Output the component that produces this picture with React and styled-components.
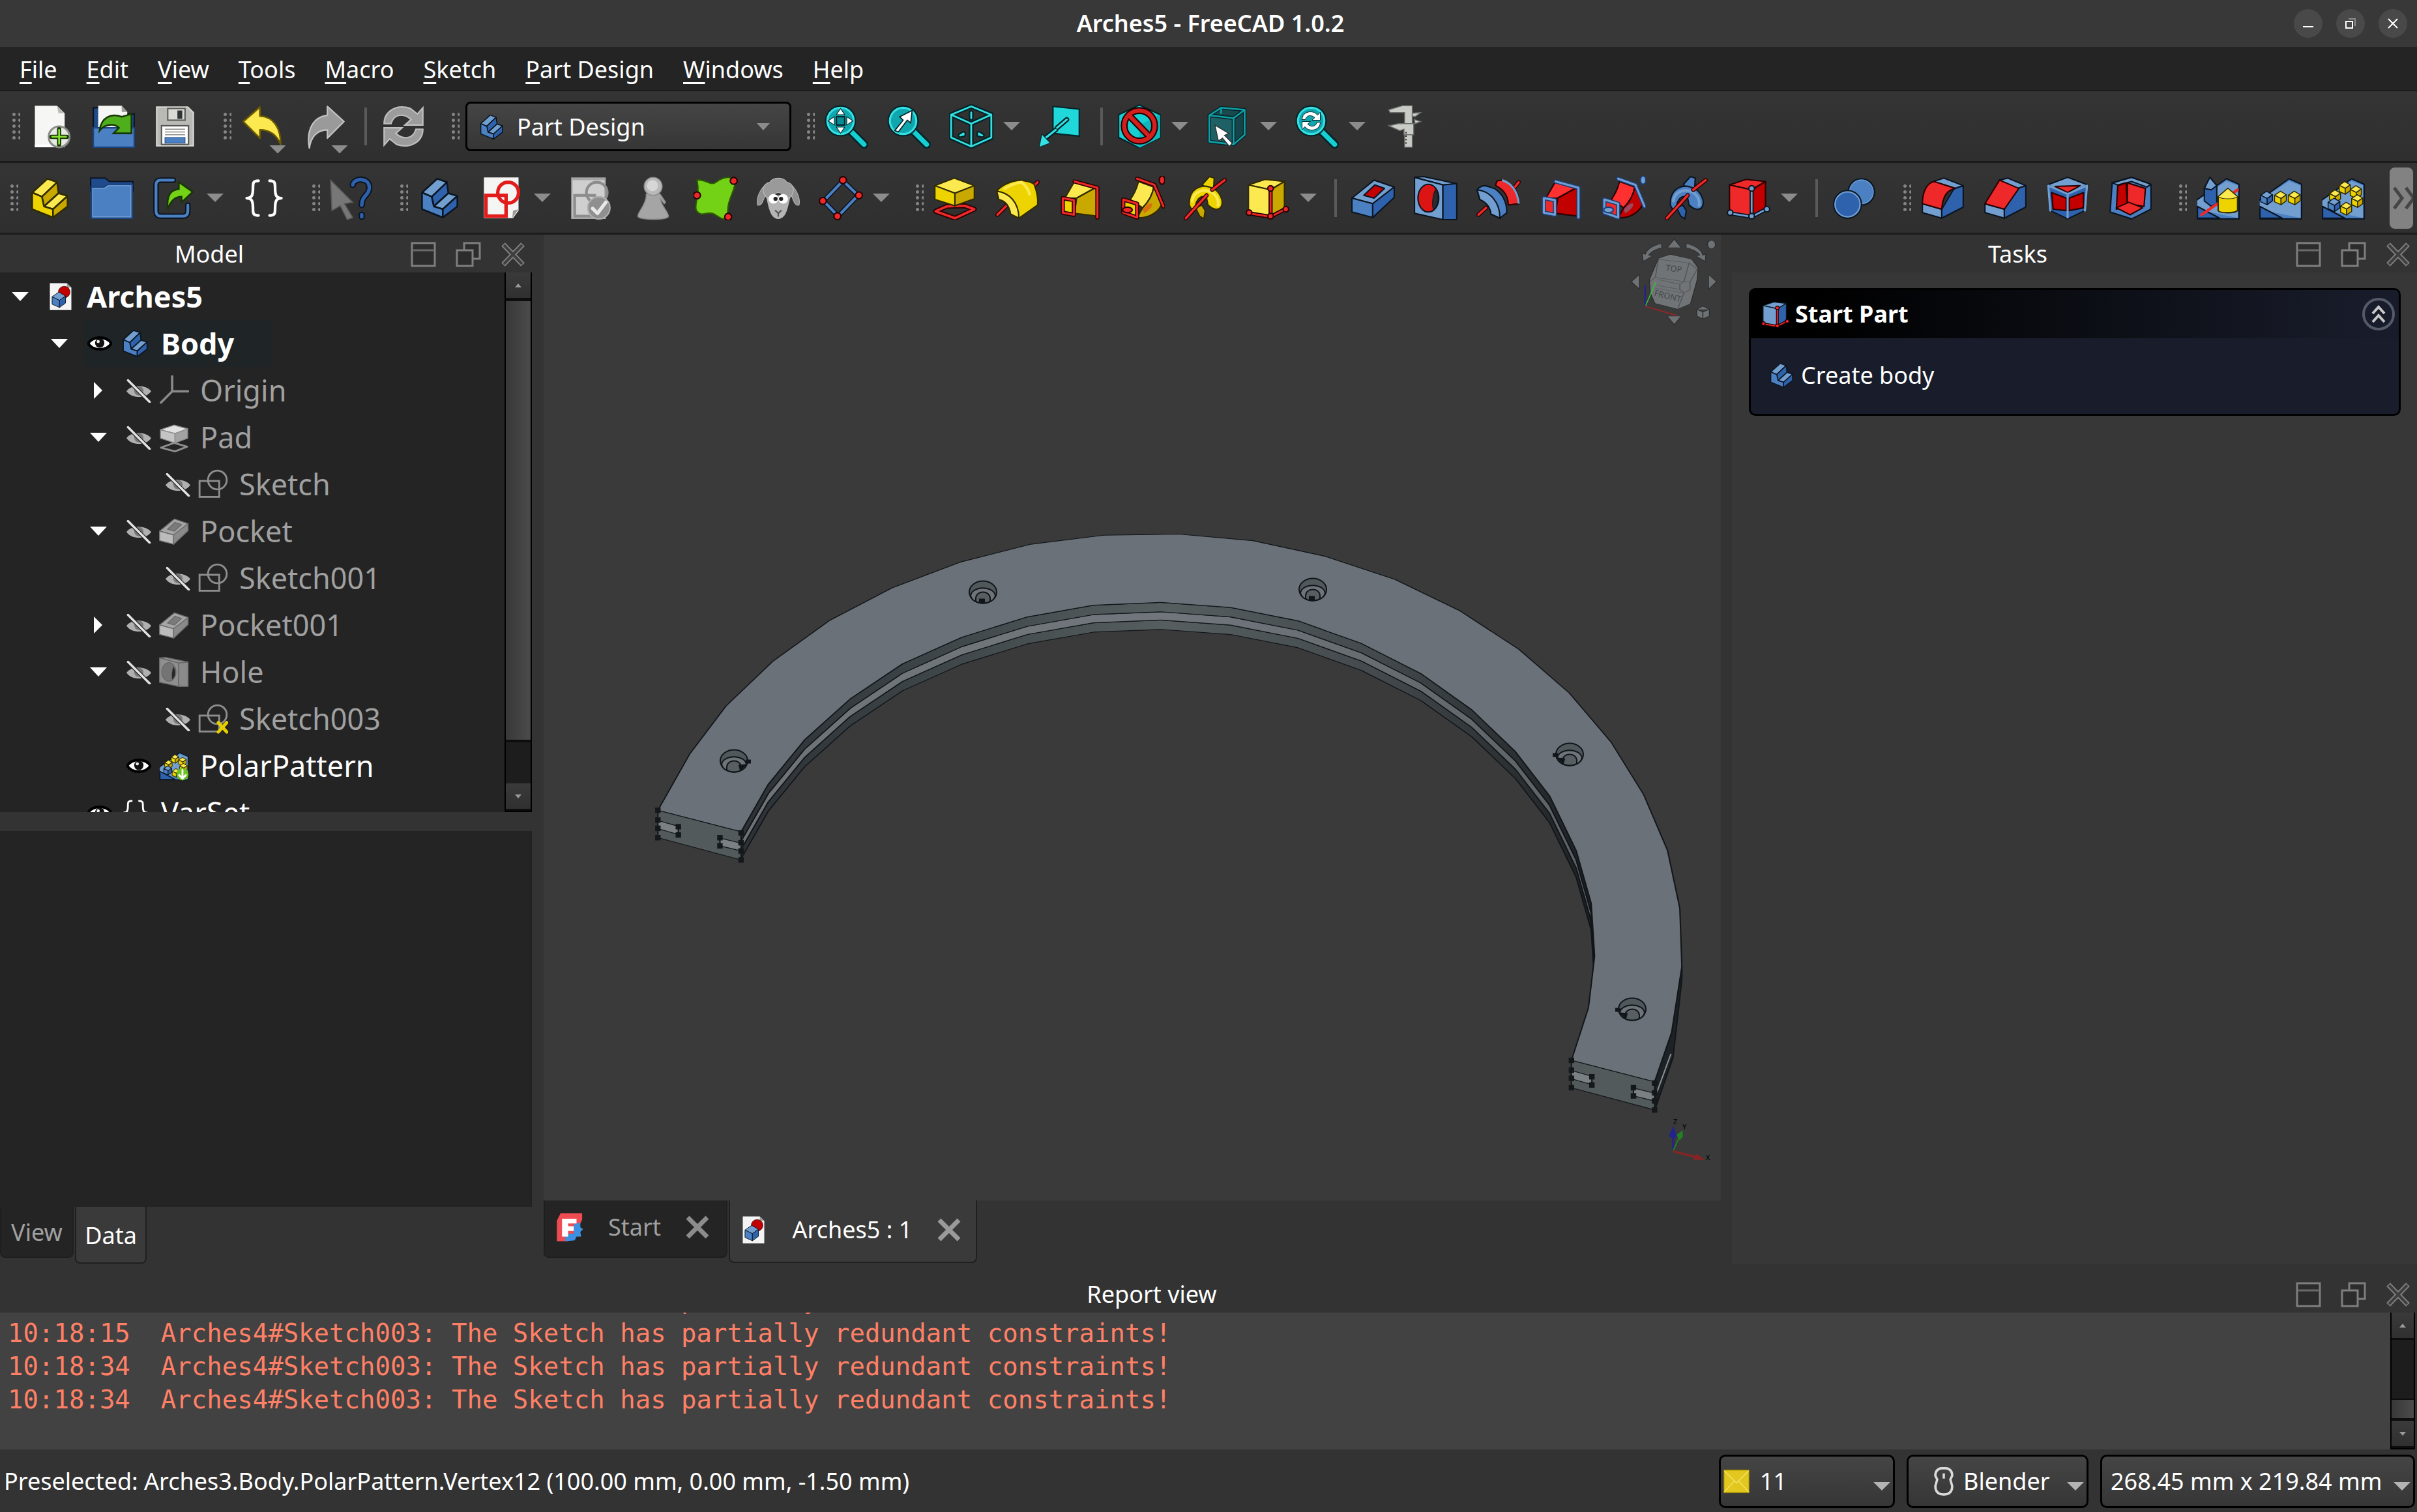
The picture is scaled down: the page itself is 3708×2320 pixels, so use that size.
import React from 'react';
import styled, { createGlobalStyle, css } from 'styled-components';

const Global = createGlobalStyle`
  *, *::before, *::after { box-sizing: border-box; }
  html, body { margin: 0; background: #333333; }
  body, button, select { font-family: "Noto Sans", "Open Sans", sans-serif; font-size: 36px; line-height: 48px; color: #ffffff; }
  button { margin: 0; padding: 0; border: 0; background: none; }
  svg { display: block; flex: none; }
  ul { margin: 0; padding: 0; list-style: none; }
`;

/* ---------- palette ---------- */
const B = { l: '#729fcf', m: '#4b80c2', d: '#2f62ad', k: '#0b1521' };
const Y = { l: '#fce94f', m: '#edd400', d: '#c9a800', k: '#302b00' };
const R = { l: '#ff3030', m: '#ef2929', d: '#c20000', k: '#280000' };
const G = { l: '#dcdcdc', m: '#b4b4b4', d: '#8e8e8e', k: '#555555' };
const C = { l: '#34e0e2', m: '#16cfd2', d: '#078c94', k: '#032428' };

/* ---------- drawing helpers ---------- */
const Poly = ({ p, f = 'none', s = '#0b1521', w = 2 }) => (
  <polygon points={p} fill={f} stroke={s} strokeWidth={w} strokeLinejoin="round" />
);
const Line = ({ d, s = '#fff', w = 3, f = 'none' }) => (
  <path d={d} fill={f} stroke={s} strokeWidth={w} strokeLinejoin="round" strokeLinecap="round" />
);
const Dot = ({ x, y, r = 4, f = R.m, s = R.k }) => <circle cx={x} cy={y} r={r} fill={f} stroke={s} strokeWidth="2" />;
const Cube = ({ x, y, s, c }) => (
  <g>
    <Poly p={`${x},${y + s * 0.35} ${x + s * 0.5},${y} ${x + s},${y + s * 0.3} ${x + s * 0.55},${y + s * 0.62}`} f={c.l} s={c.k} w={1.4} />
    <Poly p={`${x},${y + s * 0.35} ${x + s * 0.55},${y + s * 0.62} ${x + s * 0.55},${y + s * 1.15} ${x},${y + s * 0.9}`} f={c.m} s={c.k} w={1.4} />
    <Poly p={`${x + s},${y + s * 0.3} ${x + s * 0.55},${y + s * 0.62} ${x + s * 0.55},${y + s * 1.15} ${x + s},${y + s * 0.82}`} f={c.d} s={c.k} w={1.4} />
  </g>
);
const Steps = ({ c }) => (
  <g>
    <Poly p="7,24 29,4 43,9 21,30" f={c.l} s={c.k} w={2.4} />
    <Poly p="21,30 43,9 45,25 24,44" f={c.d} s={c.k} w={2.4} />
    <Poly p="24,44 45,25 58,29 37,48" f={c.l} s={c.k} w={2.4} />
    <Poly p="7,24 21,30 24,44 37,48 37,60 7,48" f={c.m} s={c.k} w={2.4} />
    <Poly p="37,48 58,29 58,44 37,60" f={c.d} s={c.k} w={2.4} />
  </g>
);
const Lens = () => (
  <g>
    <Line d="M38 38 L58 58" s={C.k} w={12} />
    <Line d="M38 38 L58 58" s={C.m} w={7} />
    <circle cx="24" cy="24" r="21" fill={C.d} stroke={C.k} strokeWidth="3" />
    <circle cx="24" cy="24" r="19" fill="#0fa6ad" stroke={C.l} strokeWidth="3" />
  </g>
);
const Cycle = ({ f, k, t = '' }) => (
  <g transform={t}>
    <path d="M4 28 C4 10 22 -1 42 6 L52 14 L60 5 V30 H34 L43 22 C32 12 18 14 14 28 Z" fill={f} stroke={k} strokeWidth="2" />
    <path d="M60 36 C60 54 42 65 22 58 L12 50 L4 59 V34 H30 L21 42 C32 52 46 50 50 36 Z" fill={f} stroke={k} strokeWidth="2" />
  </g>
);
const HelixShape = ({ c }) => (
  <g>
    <Poly p="28,12 38,1 45,3 44,18 36,24" f={c.m} s={c.k} />
    <Poly p="18,46 27,42 32,50 30,62 24,58" f={c.d} s={c.k} />
    <path d="M9 42 C8 18 26 12 38 16 C54 20 60 38 54 46 C50 50 42 48 36 42 L34 32 C26 26 18 34 18 46 L12 48 Z" fill={c.m} stroke={c.k} strokeWidth="2" />
    <path d="M13 38 C14 22 30 18 40 23 C50 28 52 38 50 44" fill="none" stroke={c.l} strokeWidth="4" />
    <Line d="M4 61 L34 28 M42 20 L60 6" s={R.k} w={6} />
    <Line d="M4 61 L34 28 M42 20 L60 6" s={R.m} w={3.4} />
  </g>
);
const BoxAxes = ({ c, a, ak }) => (
  <g>
    <Poly p="4,13 28,5 56,8 36,20" f={c.l} s={c.k} />
    <Poly p="4,13 36,20 36,58 4,52" f={c.l} s={c.k} />
    <Poly p="36,20 56,8 56,46 36,58" f={c.d} s={c.k} />
    <Line d="M5 54 L36 59 L57 48 M36 59 V20" s={ak} w={6} />
    <Line d="M5 54 L36 59 L57 48 M36 59 V20" s={a} w={2.6} />
    <Dot x={5} y={53} f={a} s={ak} /><Dot x={36} y={58} f={a} s={ak} /><Dot x={58} y={48} f={a} s={ak} /><Dot x={36} y={18} f={a} s={ak} />
  </g>
);
const LoftShape = ({ c, a, ak }) => (
  <g>
    <Poly p="10,32 24,8 56,16 27,32" f={c.l} s={c.k} />
    <Poly p="27,32 56,16 56,58 24,54" f={c.d} s={c.k} />
    <Line d="M24 8 L57 17 V60" s={ak} w={6} /><Line d="M24 8 L57 17 V60" s={a} w={3} />
    <Poly p="7,32 23,35 23,56 7,53" f={c.m} s={ak} w={6} /><Poly p="7,32 23,35 23,56 7,53" s={a} w={3} />
  </g>
);
const PipeShape = ({ c, a, ak }) => (
  <g>
    <path d="M14 34 C20 26 24 16 26 8 L48 16 C46 28 40 38 32 46 Z" fill={c.l} stroke={c.k} strokeWidth="2" />
    <path d="M32 46 C40 38 46 28 48 16 L60 40 C54 54 38 62 24 60 Z" fill={c.d} stroke={c.k} strokeWidth="2" />
    <path d="M32 48 C38 42 42 38 46 40 C46 46 40 50 34 54 Z" fill={a} opacity=".45" />
    <Line d="M24 4 L49 13 L62 44" s={ak} w={6} /><Line d="M24 4 L49 13 L62 44" s={a} w={3} />
    <Poly p="4,34 24,40 24,60 4,53" f={c.m} s={ak} w={6} /><Poly p="4,34 24,40 24,60 4,53" s={a} w={3} />
    <ellipse cx="10" cy="49" rx="7" ry="4" fill={a} stroke={ak} strokeWidth="2" />
    <ellipse cx="60" cy="6" rx="4" ry="6" fill={a} stroke={ak} strokeWidth="2" />
  </g>
);
const SketchGlyph = ({ c, w = 4 }) => (
  <g fill="none" stroke={c} strokeWidth={w}>
    <rect x="9" y="28" width="29" height="30" />
    <circle cx="41" cy="24" r="15" />
  </g>
);
const Plate = () => (
  <g>
    <Poly p="2,34 44,4 62,12 62,62 2,62" f={B.m} s={B.k} />
    <Poly p="2,36 44,8 60,14 60,60 2,48" f={B.l} s={B.l} w={1} />
    <Poly p="2,44 34,61 2,61" f={B.d} s={B.k} />
  </g>
);
const PocketShape = ({ c, hole }) => (
  <g>
    <Poly p="1,32 33,6 62,16 31,40" f={c.l} s={c.k} />
    <Poly p="1,32 31,40 31,60 1,52" f={c.m} s={c.k} />
    <Poly p="31,40 62,16 62,31 31,60" f={c.d} s={c.k} />
    <Poly p="18,28 34,13 48,18 33,32" f={hole} s={c.k} />
  </g>
);
const HoleShape = ({ c, hole, hd }) => (
  <g>
    <Poly p="1,2 14,1 62,11 42,13" f={c.l} s={c.k} />
    <Poly p="1,2 42,13 42,63 1,54" f={c.l} s={c.k} />
    <Poly p="42,13 62,11 62,63 42,63" f={c.d} s={c.k} />
    <ellipse cx="21" cy="32" rx="15" ry="20" fill={hole} stroke={c.k} strokeWidth="2" />
    <path d="M31 20 C37 30 36 42 28 49 C26 40 27 28 31 20 Z" fill={hd} stroke={c.k} strokeWidth="1" />
  </g>
);
const DocGlyph = () => (
  <g>
    <path d="M8 2 H46 L56 12 V62 H8 Z" fill="#f4f4f4" />
    <path d="M46 2 V12 H56 Z" fill="#9a9a9a" />
    <circle cx="40" cy="22" r="13" fill={R.d} stroke={R.k} strokeWidth="1" />
    <Cube x={13} y={22} s={30} c={B} />
  </g>
);
const RingCubes = () => (
  <g>
    {[[26, 8], [42, 14], [12, 20], [44, 27], [28, 38]].map(([x, y]) => <Cube key={x + '-' + y} x={x} y={y} s={16} c={Y} />)}
    <Cube x={10} y={32} s={17} c={B} />
  </g>
);

/* ---------- icon table (64 x 64 grid) ---------- */
const art = {
  newDoc: <g>
    <path d="M8 2 H40 L51 13 V62 H8 Z" fill="#f6f6f4" /><path d="M40 2 L51 13 H42 Z" fill="#b9b9b5" /><path d="M8 58 H51 V62 H8Z" fill="#fff" />
    <circle cx="43" cy="47" r="15" fill="#e8e8e4" stroke="#8a8c86" strokeWidth="3" />
    <Line d="M43 36 V58 M32 47 H54" s="#173604" w={6} /><Line d="M43 37 V57 M33 47 H53" s="#8ae234" w={2.5} />
  </g>,
  open: <g>
    <path d="M3 5 H40 V14 H62 V34 H3 Z" fill="#204a87" stroke={B.k} strokeWidth="2" />
    <path d="M10 2 H44 L52 11 V34 H10 Z" fill="#f6f6f4" /><path d="M44 2 L52 11 H44 Z" fill="#9a9a98" />
    <path d="M3 34 H62 V62 H3 Z" fill={B.m} stroke="#1b4484" strokeWidth="2" />
    <path d="M12 38 C14 20 28 12 44 18 L58 14 V42 H32 L40 34 C32 26 18 30 12 38 Z" fill="#4fae1b" stroke="#173604" strokeWidth="2.4" />
  </g>,
  save: <g>
    <path d="M5 4 H50 L58 12 V60 H5 Z" fill="#b9bab6" stroke="#dadad6" strokeWidth="2" />
    <rect x="21" y="6" width="25" height="17" fill="#d9d9d5" stroke="#5c5e5a" strokeWidth="2" /><rect x="35" y="9" width="7" height="12" fill="#2e3436" />
    <rect x="12" y="31" width="39" height="27" fill="#fff" stroke="#555753" strokeWidth="2" />
    <path d="M17 36 H46 M17 40 H46 M17 44 H46" stroke="#8b8d88" strokeWidth="1.6" /><rect x="17" y="48" width="29" height="8" fill={B.m} stroke="#204a87" />
  </g>,
  undo: <path d="M4 25 L28 4 V17 C48 18 58 34 58 58 C52 44 42 37 28 37 V49 Z" fill={Y.l} stroke="#6b5a00" strokeWidth="2.4" strokeLinejoin="round" />,
  redo: <path d="M60 25 L36 3 V16 C16 18 5 36 10 64 C12 46 22 37 36 37 V49 Z" fill="#9a9a9a" stroke="#c4c4c4" strokeWidth="2" strokeLinejoin="round" />,
  refresh: <Cycle f="#9c9c9c" k="#c0c0c0" />,
  fit: <g><Lens />
    <rect x="18" y="18" width="12" height="12" fill={C.d} stroke={C.k} strokeWidth="2" />
    {[0, 90, 180, 270].map((a) => <polygon key={a} points="24,6 30,15 18,15" fill="#fff" stroke={C.k} transform={`rotate(${a} 24 24)`} />)}
  </g>,
  fitSel: <g><Lens /><path d="M12 38 L24 23 L19 18 L37 9 L35 27 L30 23 L17 40 Z" fill="#fff" stroke={C.k} strokeWidth="1.6" /></g>,
  iso: <g>
    {[[C.k, 7], [C.l, 2.6]].map(([s, w]) => <Line key={s} s={s} w={w} d="M3 15 L32 3 L61 15 V48 L32 61 L3 48 Z M3 15 L32 28 L61 15 M32 28 V61 M32 12 V20 M16 45 L21 42 V44 Z M43 44 V42 L48 45 Z" />)}
  </g>,
  align: <g>
    <Poly p="22,3 60,7 60,46 22,42" f="#20d8da" s={C.k} w={2} />
    <Line d="M12 48 L26 37 M28 34 L42 22" s={C.k} w={7} /><Line d="M12 48 L26 37 M28 34 L42 22" s={C.l} w={3} />
    <Poly p="2,62 6,43 18,56" f={C.l} s={C.k} w={1} />
  </g>,
  noDraw: <g>
    <Poly p="32,1 62,15 62,48 32,63 2,48 2,15" f={C.m} s={C.k} /><Poly p="32,30 62,15 62,48 32,63" f="#0fb5bb" s="none" />
    {[[R.k, 10], ['#d41f1f', 6]].map(([s, w]) => <g key={s}><circle cx="32" cy="31" r="22" fill="none" stroke={s} strokeWidth={w} /><Line d="M17 16 L47 47" s={s} w={w} /></g>)}
  </g>,
  boxSel: <g>
    <Poly p="5,16 22,5 56,8 40,20" f="#17494d" s={C.k} w={5} /><Poly p="5,16 40,20 40,58 5,54" f="#1f6064" s={C.k} w={5} /><Poly p="40,20 56,8 56,44 40,58" f="#174448" s={C.k} w={5} />
    <Line d="M5 16 L22 5 L56 8 L40 20 Z M5 16 V54 L40 58 V20 M56 8 V44 L40 58 M22 6 V13" s="#12a0a6" w={2.4} />
    <path d="M13 30 L33 42 L27 45 L38 56 L34 61 L24 49 L18 53 Z" fill="#fff" stroke="#2e3436" strokeWidth="1.4" />
  </g>,
  lensSync: <g><Lens /><Cycle f="#fff" k={C.k} t="translate(9 9) scale(.47)" /></g>,
  caliper: <g fill="#c9cbc7" stroke="#6d6f6b" strokeWidth="1.4">
    <path d="M8 8 L28 2 H42 V62 H31 V12 H10 Z" /><path d="M8 31 L22 28 H44 V44 H30 V36 L24 38 Z" />
    <path d="M42 13 L54 12 L46 18 L42 17 Z M45 22 L54 25 L46 28 Z" /><path d="M33 40 V58" stroke="#333" strokeWidth="2" strokeDasharray="2 3" />
  </g>,
  part: <Steps c={Y} />,
  body: <Steps c={B} />,
  folder: <g>
    <path d="M1 3 H22 L28 8 H62 V22 H1 Z" fill="#1f4b8c" stroke={B.k} strokeWidth="2" /><path d="M2 16 H20 L26 12 H61 V61 H2 Z" fill={B.m} stroke="#1b4484" strokeWidth="2.4" />
    <path d="M4 18 H21 L27 14 H59 V59 H4 Z" fill="none" stroke={B.l} strokeWidth="1.4" />
  </g>,
  link: <g>
    {[[B.k, 8], [B.m, 4]].map(([s, w]) => <Line key={s} s={s} w={w} d="M30 6 H12 Q5 6 5 13 V50 Q5 58 12 58 H44 Q51 58 51 50 V42" />)}
    <path d="M22 48 C20 28 26 20 38 19 V9 L58 23 L42 38 V30 C32 30 26 36 22 48 Z" fill="#73d216" stroke="#173604" strokeWidth="2.4" />
  </g>,
  braces: <Line s="#fff" w={4} d="M25 7 C17 7 17 10 17 18 C17 28 15 32 8 32 C15 32 17 36 17 46 C17 54 17 57 25 57 M41 7 C49 7 49 10 49 18 C49 28 51 32 58 32 C51 32 49 36 49 46 C49 54 49 57 41 57" />,
  what: <g>
    <path d="M2 6 L34 38 L22 40 L34 60 L26 63 L16 43 L4 50 Z" fill="#777" stroke="#5a5a5a" strokeWidth="1.5" />
    {[[B.k, 9], [B.d, 5]].map(([s, w]) => <Line key={s} s={s} w={w} d="M34 13 C36 2 58 2 58 17 C58 28 47 28 47 42 M47 56 V59" />)}
  </g>,
  sketch: <g><path d="M6 2 H56 V50 L48 61 H6 Z" fill="#f5f5f3" /><path d="M56 48 L47 61 L48 50 Z" fill="#9c9c9a" /><SketchGlyph c="#e21b1b" w={5} /></g>,
  validate: <g><path d="M4 2 H54 V62 H4 Z" fill="#a7a7a7" /><path d="M6 6 H52 V60 H6 Z" fill="#cfcfcf" /><SketchGlyph c="#8d8d8d" />
    <circle cx="44" cy="46" r="16" fill="#8f8f8f" stroke="#b0b0b0" strokeWidth="2" /><Line d="M35 47 L42 54 L54 38" s="#e8e8e8" w={5} /></g>,
  pawn: <g fill="#a5a5a5" stroke="#8c8c8c" strokeWidth="1.4">
    <path d="M22 26 H42 L50 38 L48 40 L42 32 C44 44 54 52 54 58 C54 64 10 64 10 58 C10 52 20 44 22 30 Z" /><circle cx="32" cy="15" r="13" fill="#b9b9b9" /><circle cx="31" cy="14" r="8" fill="#d6d6d6" stroke="none" />
  </g>,
  shape: <g><path d="M5 6 C18 4 24 16 34 8 C42 2 52 0 60 5 C62 22 46 34 50 60 C38 66 36 56 26 54 C16 52 12 60 4 50 C0 40 10 30 5 6 Z" fill="#73d216" stroke="#2c5a05" strokeWidth="2" />
    <Dot x={58} y={7} r={5} /><Dot x={5} y={28} r={5} /><Dot x={50} y={59} r={5} /></g>,
  sheep: <g>
    <path d="M12 14 C4 22 0 34 2 42 C8 44 10 36 13 28 Z M52 14 C60 22 64 34 62 42 C56 44 54 36 51 28 Z" fill="#909090" stroke="#b5b5b5" />
    <path d="M14 28 C18 44 20 62 32 62 C44 62 46 44 50 28 Z" fill="#b4b4b4" />
    <path d="M14 30 C6 20 12 10 20 9 C24 1 40 1 44 9 C52 10 58 20 50 30 C44 36 40 24 32 24 C24 24 20 36 14 30 Z" fill="#9a9a9a" stroke="#bdbdbd" />
    <circle cx="25" cy="33" r="7" fill="#fff" /><circle cx="39" cy="33" r="7" fill="#fff" /><circle cx="28" cy="33" r="3" fill="#222" /><circle cx="36" cy="33" r="3" fill="#222" />
    <Line d="M28 50 L32 54 L36 50 M32 54 V58" s="#555" w={2} />
  </g>,
  datum: <g>
    {[[B.k, 7], [B.m, 4]].map(([s, w]) => <Line key={s} s={s} w={w} d="M35 7 L57 28 L28 58 L7 36 Z" />)}
    <Dot x={35} y={6} r={5} /><Dot x={58} y={28} r={5} /><Dot x={27} y={58} r={5} /><Dot x={6} y={36} r={5} />
  </g>,
  pad: <g>
    <Poly p="4,51 20,44 46,43 60,48 32,61" s={R.k} w={7} /><Poly p="4,51 20,44 46,43 60,48 32,61" s={R.m} w={3.4} />
    <Poly p="3,14 31,3 60,14 32,25" f={Y.l} s={Y.k} /><Poly p="3,14 32,25 32,43 3,34" f={Y.m} s={Y.k} /><Poly p="32,25 60,14 60,33 32,43" f={Y.d} s={Y.k} />
  </g>,
  revolve: <g>
    <Line d="M3 56 L16 43 M50 20 L61 9" s={R.k} w={6} /><Line d="M3 56 L16 43 M50 20 L61 9" s={R.m} w={3.4} />
    <path d="M2 22 C8 14 22 7 36 6 C44 7 52 8 56 12 C60 22 62 32 61 42 L34 61 L22 55 C20 42 14 36 5 34 Z" fill={Y.m} stroke={Y.k} strokeWidth="2" />
    <path d="M2 22 C20 24 34 38 34 61 L22 55 C20 42 14 36 5 34 Z" fill={Y.l} stroke={Y.k} strokeWidth="2" /><path d="M12 19 C20 14 30 10 38 9 C44 14 48 20 50 28" stroke={Y.l} strokeWidth="4" fill="none" />
  </g>,
  loft: <LoftShape c={Y} a={R.m} ak={R.k} />,
  pipe: <PipeShape c={Y} a={R.m} ak={R.k} />,
  helix: <HelixShape c={Y} />,
  addBox: <BoxAxes c={Y} a={R.m} ak={R.k} />,
  pocket: <PocketShape c={B} hole={R.d} />,
  hole: <HoleShape c={B} hole="#dc1414" hd="#2b2b2b" />,
  groove: <g>
    <Line d="M3 56 L14 46 M54 18 L61 9" s={R.k} w={6} /><Line d="M3 56 L14 46 M54 18 L61 9" s={R.m} w={3.4} />
    <path d="M28 12 L30 7 L37 6 C44 7 48 10 51 14 C58 20 62 30 61 40 L46 42 C46 30 40 20 28 14 Z" fill={R.m} stroke={R.k} strokeWidth="2" />
    <path d="M37 6 C50 10 60 22 61 40" fill="none" stroke={B.l} strokeWidth="3" />
    <path d="M1 20 C4 16 8 14 13 14 L26 18 C38 26 44 38 44 53 L34 61 L21 55 C20 44 14 38 5 34 Z" fill={B.m} stroke={B.k} strokeWidth="2" />
    <path d="M1 20 C20 22 34 38 34 61 L21 55 C20 44 14 38 5 34 Z" fill={B.l} stroke={B.k} strokeWidth="2" />
  </g>,
  subLoft: <LoftShape c={R} a={B.l} ak="#1b3f7a" />,
  subPipe: <PipeShape c={R} a={B.l} ak="#1b3f7a" />,
  subHelix: <HelixShape c={B} />,
  subBox: <BoxAxes c={{ ...R, l: R.m }} a={B.l} ak={B.k} />,
  bool: <g><circle cx="42" cy="23" r="19" fill={B.m} stroke={B.k} strokeWidth="2" /><circle cx="42" cy="23" r="17" fill="none" stroke={B.l} /><circle cx="22" cy="41" r="20" fill={B.d} stroke={B.k} strokeWidth="2" /><circle cx="22" cy="41" r="18" fill="none" stroke={B.l} strokeWidth="2" /></g>,
  fillet: <g>
    <Poly p="3,40 31,48 31,61 3,53" f={B.l} s={B.k} /><Poly p="31,48 50,16 62,14 62,45 31,61" f={B.d} s={B.k} />
    <Poly p="19,8 34,3 62,14 50,18" f={B.l} s={B.k} /><path d="M3 40 C3 22 10 10 20 8 L51 18 C38 20 32 32 31 48 Z" fill={R.m} stroke={R.k} strokeWidth="2" />
  </g>,
  chamfer: <g>
    <Poly p="3,40 31,48 31,61 3,53" f={B.l} s={B.k} /><Poly p="31,48 50,16 62,14 62,45 31,61" f={B.d} s={B.k} />
    <Poly p="24,6 36,3 62,14 50,18" f={B.l} s={B.k} /><Poly p="3,40 24,6 52,18 31,48" f={R.m} s={R.k} />
  </g>,
  draft: <g>
    <Poly p="3,13 32,2 61,13 57,50 32,62 7,50" f={B.d} s={B.k} /><Poly p="3,13 32,2 61,13 32,26" f={B.l} s={B.k} />
    <Poly p="9,24 30,32 30,50 11,48" f={R.d} s={R.k} /><Poly p="34,32 55,24 55,46 34,50" f={R.d} s={R.k} /><Poly p="14,15 50,14 32,24" f={R.m} s={R.k} />
    <Line d="M32 26 V60 M4 14 L32 26 L60 14 M4 14 L7 50 M60 14 L57 50" s={B.l} w={3} />
  </g>,
  thick: <g>
    <Poly p="6,10 34,2 62,12 62,48 34,62 3,52" f={B.m} s={B.k} /><Poly p="6,10 34,2 62,12 56,16 34,8 14,13" f={B.l} s={B.k} />
    <Poly p="14,14 26,10 28,44 12,48" f={R.d} s={R.k} /><Poly p="28,10 54,18 52,44 28,40" f={R.m} s={R.k} /><Poly p="12,46 30,38 50,46 32,56" f={R.m} s={R.k} />
  </g>,
  mirror: <g><Plate /><Poly p="12,18 20,2 30,14 30,40 22,44 12,36" f={B.d} s={B.k} /><Poly p="12,18 20,2 30,14 22,20" f={B.l} s={B.k} />
    <Line d="M8 56 L60 20" s={R.m} w={4} /><path d="M32 30 V50 C34 54 56 54 60 50 V30 L46 18 Z" fill={Y.m} stroke={Y.k} strokeWidth="2" /><path d="M32 30 C38 34 54 34 60 30 L46 18 Z" fill={Y.l} stroke={Y.k} /></g>,
  linear: <g><Plate /><Cube x={3} y={22} s={17} c={B} /><Cube x={23} y={22} s={17} c={Y} /><Cube x={43} y={22} s={17} c={Y} /></g>,
  polar: <g><Plate /><RingCubes /></g>,
  doc: <DocGlyph />,
  origin: <g><Line d="M28 34 V2 M28 34 H62 M28 34 L4 58" s="#8a8a8a" w={5} /></g>,
  padGrey: <g><Poly p="4,54 32,44 60,52 34,62" s={G.d} w={4} /><Poly p="3,16 32,6 61,14 34,24" f="#e2e2e2" s={G.d} /><Poly p="3,16 34,24 34,44 3,34" f="#c4c4c4" s={G.d} /><Poly p="34,24 61,14 61,34 34,44" f="#a2a2a2" s={G.d} /></g>,
  pocketGrey: <PocketShape c={{ l: '#a6a6a6', m: '#bcbcbc', d: '#8a8a8a', k: '#6c6c6c' }} hole="#7a7a7a" />,
  holeGrey: <HoleShape c={{ l: '#8f8f8f', m: '#999', d: '#8a8a8a', k: '#686868' }} hole="#747474" hd="#262626" />,
  sketchGrey: <g fill="none" stroke="#8d8d8d" strokeWidth="4"><rect x="3" y="25" width="42" height="34" /><circle cx="41" cy="23" r="20" /></g>,
  sketchBad: <g><g fill="none" stroke="#8d8d8d" strokeWidth="4"><rect x="3" y="25" width="42" height="34" /><circle cx="41" cy="23" r="20" /></g><Line d="M43 40 L61 60 M61 40 L43 60" s="#e6cf00" w={7} /></g>,
  polarOk: <g><Plate /><RingCubes /><circle cx="50" cy="50" r="13" fill="#6cc21f" /><Line d="M50 41 V58 M43 52 L50 59 L57 52" s="#fff" w={4} /></g>,
  datumBlue: <BoxAxes c={B} a={R.m} ak={R.k} />,
  eye: <g><path d="M2 32 C14 12 50 12 62 32 C50 52 14 52 2 32 Z" fill="#fff" stroke="#000" strokeWidth="7" /><circle cx="32" cy="31" r="12" fill="#111" /><circle cx="28" cy="27" r="4" fill="#eee" /></g>,
  eyeOff: <g><path d="M0 34 C12 16 50 16 64 34 C50 54 14 54 0 34 Z" fill="#b0b0b0" /><circle cx="32" cy="33" r="12" fill="#787878" /><Line d="M4 6 L60 62" s="#222" w={10} /><Line d="M4 6 L60 62" s="#e2e2e2" w={6} /></g>,
  freecad: <g><path d="M14 2 H60 V16 L54 28 L30 62 H6 V18 Z" fill="#ee4b52" /><path d="M42 26 L56 22 V32 L62 36 L56 42 L58 52 L48 52 L44 60 L24 62 V46 H42 Z" fill="#3d8fe0" /><path d="M17 14 H48 V24 H30 V30 H42 V40 H30 V52 H17 Z" fill="#fff" /></g>,
  mouse: <g fill="none" stroke="#dadada" strokeWidth="5"><path d="M27 4 H37 Q50 6 50 20 L46 28 L50 42 Q50 60 32 60 Q14 60 14 42 L18 28 L14 20 Q14 6 27 4 Z" /><path d="M32 15 V26" strokeWidth="5" /></g>,
  swatch: <g><rect x="1" y="4" width="62" height="56" fill="#e2c81e" stroke="#8d7a00" strokeWidth="2" /><path d="M2 6 L32 36 L62 6 M2 58 L26 32 M62 58 L38 32" fill="none" stroke="#f4e46a" strokeWidth="2" /></g>,
};

const Art = ({ name, size = 68 }) => (
  <svg width={size} height={size} viewBox="0 0 64 64" aria-hidden="true">{art[name]}</svg>
);

/* ---------- frame ---------- */
const Window = styled.div`
  display: flex; flex-direction: column; width: 100%; height: 100vh; overflow: hidden; background: #333333;
`;
const TitleBar = styled.header`
  flex: none; display: grid; grid-template-columns: 1fr auto 1fr; align-items: center; height: 72px; background: #383838;
`;
const WindowTitle = styled.h1`
  grid-column: 2; margin: 0; padding-left: 6px; font-size: 36px; line-height: 48px; font-weight: 600;
`;
const WindowButtons = styled.div`
  display: flex; justify-content: flex-end; gap: 21px; padding-right: 15px;
`;
const RoundButton = styled.button`
  display: grid; place-items: center; width: 44px; height: 44px; border-radius: 50%; background: #494949;
`;
const MenuBar = styled.nav`
  flex: none; display: flex; align-items: center; gap: 45px; height: 68px; padding: 4px 30px 0;
  background: #242424; border-bottom: 2px solid #1b1b1b;
`;
const MenuItem = styled.button`
  u { text-decoration-thickness: 3px; text-underline-offset: 6px; text-decoration-skip-ink: none; }
`;

/* ---------- toolbars ---------- */
const ToolBar = styled.div`
  flex: none; display: flex; align-items: center; height: 110px; padding-left: ${(p) => p.$lead}px;
  background: linear-gradient(#343434, #2f2f2f); border-bottom: 3px solid #1b1b1b;
`;
const Grip = styled.div`
  flex: none; display: flex; justify-content: flex-end; width: ${(p) => (p.$first ? 20 : 39)}px; padding-right: 3px;
  &::after {
    content: ""; width: 14px; height: 46px;
    background: radial-gradient(circle, #858585 2px, transparent 3px) 0 0 / 9px 9px;
  }
`;
const Divider = styled.div`
  flex: none; display: flex; justify-content: center; width: 26px;
  &::after { content: ""; width: 4px; height: 58px; background: #5a5a5a; }
`;
const ToolButton = styled.button`
  position: relative; flex: none; display: flex; align-items: center;
  width: ${(p) => p.$cell + (p.$menu ? 40 : 0)}px; height: 88px; padding-left: 11px;
`;
const Triangle = styled.span`
  flex: none; width: 26px; height: 13px; background: ${(p) => p.$tone || '#8c8c8c'};
  clip-path: polygon(0 0, 100% 0, 50% 100%);
`;
const ToolTriangle = styled(Triangle)`margin-left: 15px;`;
const CornerTriangle = styled(Triangle)`position: absolute; right: 14px; bottom: 2px;`;
const ComboBox = styled.label`
  flex: none; display: flex; align-items: center; gap: 18px; width: 500px; height: 76px; padding: 2px 30px 0 16px; margin-left: 6px;
  border: 3px solid #000; border-radius: 8px; background: linear-gradient(#454545, #363636);
`;
const ComboSelect = styled.select`
  flex: 1; min-width: 0; border: 0; padding: 0; background: transparent; appearance: none;
`;
const SmallTriangle = styled(Triangle)`width: 20px; height: 11px;`;
const Overflow = styled.button`
  flex: none; display: grid; place-items: center; width: 36px; height: 94px; margin: 0 6px 0 auto; border-radius: 8px; background: #828282; overflow: hidden;
`;

/* ---------- docks ---------- */
const Main = styled.main`flex: 1; min-height: 0; display: flex;`;
const LeftDock = styled.aside`flex: none; display: flex; flex-direction: column; width: 816px;`;
const CenterArea = styled.section`flex: 1; min-width: 0; display: flex; flex-direction: column; margin: 0 17px 0 18px;`;
const RightDock = styled.aside`flex: none; display: flex; flex-direction: column; width: 1051px;`;
const DockTitle = styled.div`
  flex: none; display: flex; align-items: center; height: 58px; padding: 2px 10px 0 12px;
`;
const DockLabel = styled.h2`flex: 1; margin: 0; font-size: 36px; line-height: 48px; font-weight: 400; text-align: center;`;
const DockButtons = styled.div`display: flex; gap: 30px;`;
const TreePane = styled.div`flex: 828 1 0; min-height: 0; display: flex; background: #242424;`;
const Tree = styled.ul`flex: 1; min-width: 0; height: 100%; padding-top: 1px; overflow: hidden;`;
const TreeItem = styled.li`
  display: flex; align-items: center; height: 72px; padding-left: ${(p) => p.$level * 60}px;
  font-size: 45px; line-height: 60px; font-weight: ${(p) => (p.$bold ? 700 : 400)}; color: ${(p) => (p.$dim ? '#a0a0a0' : '#ffffff')};
`;
const Expander = styled.span`flex: none; display: grid; place-items: center; width: 62px; height: 72px; margin-right: 6px;`;
const TreeSlots = styled.span`
  display: flex; align-items: center; gap: 4px; height: 72px; padding-right: 56px;
  ${(p) => p.$hot && css`background: #1f2427;`}
`;
const Slot = styled.span`flex: none; display: grid; place-items: center; width: 50px; height: 50px;`;
const TreeText = styled.span`margin-left: 11px; white-space: nowrap;`;
const PropertyPane = styled.div`flex: 577 1 0; min-height: 0; margin-top: 29px; background: #242424; border-right: 2px solid #202020;`;
const PaneTabs = styled.div`flex: none; display: flex; align-items: flex-start; gap: 2px; height: 88px;`;
const PaneTab = styled.button`
  width: ${(p) => (p.$on ? 110 : 113)}px; height: ${(p) => (p.$on ? 87 : 78)}px; padding-top: 2px;
  color: ${(p) => (p.$on ? '#ffffff' : '#a0a0a0')}; background: ${(p) => (p.$on ? '#3a3a3a' : '#242424')};
  border: 2px solid #1f1f1f; border-top: 0; border-radius: 0 0 8px 8px;
`;

/* ---------- scroll bars ---------- */
const ScrollBar = styled.div`flex: none; display: flex; flex-direction: column; width: ${(p) => p.$w}px; background: #1d1d1d; border: 2px solid #000; border-top: 0;`;
const ScrollButton = styled.button`
  flex: none; display: grid; place-items: center; height: 42px; background: linear-gradient(#3a3a3a, #303030); border-bottom: 3px solid #0d0d0d;
`;
const ScrollGap = styled.div`flex: ${(p) => p.$n} 1 0;`;
const ScrollHandle = styled.div`
  flex: ${(p) => p.$n} 1 0; background: linear-gradient(90deg, #383838, #4b4b4b); border: 0 solid #0d0d0d; border-width: 2px 0 4px;
`;

/* ---------- centre ---------- */
const Canvas = styled.div`flex: 1; min-height: 0; background: #3a3a3a; svg { width: 100%; height: 100%; }`;
const DocTabs = styled.div`flex: none; display: flex; align-items: flex-start; gap: 2px; height: 98px;`;
const DocTab = styled.div`
  display: flex; align-items: center; justify-content: space-between;
  width: ${(p) => (p.$on ? 381 : 282)}px; height: ${(p) => (p.$on ? 96 : 88)}px; padding: 0 ${(p) => (p.$on ? 22 : 25)}px 4px 14px;
  color: ${(p) => (p.$on ? '#ffffff' : '#a0a0a0')}; background: ${(p) => (p.$on ? '#3a3a3a' : '#242424')};
  border: 2px solid #1f1f1f; border-top: 0; border-radius: 0 0 8px 8px;
`;
const TabButton = styled.button`flex: 1; color: inherit; text-align: center;`;

/* ---------- tasks ---------- */
const TaskArea = styled.div`flex: 1; padding: 24px 25px 0 26px; background: #373737;`;
const TaskCard = styled.section`border: 3px solid #000; border-radius: 10px; background: #191d2b; overflow: hidden;`;
const TaskHead = styled.div`
  display: flex; align-items: center; gap: 8px; height: 74px; padding: 0 5px 0 16px;
  background: linear-gradient(90deg, #000 10%, #181c2a 95%);
`;
const TaskTitle = styled.h3`flex: 1; margin: 0; font-size: 36px; line-height: 48px; font-weight: 700;`;
const TaskBody = styled.div`display: flex; align-items: flex-start; height: 116px; padding: 33px 0 0 26px;`;
const TaskLink = styled.a`display: flex; align-items: center; gap: 9px; color: #ffffff; text-decoration: none;`;

/* ---------- report + status ---------- */
const ReportDock = styled.section`flex: none; display: flex; flex-direction: column; margin-top: 16px;`;
const ReportPane = styled.div`display: flex; height: 210px; padding-right: 3px;`;
const Log = styled.div`
  flex: 1; display: flex; flex-direction: column; justify-content: flex-end; min-width: 0; padding: 0 12px; overflow: hidden;
  background: #424242; color: #ff8066; font-family: "DejaVu Sans Mono", monospace; font-size: 39px; line-height: 51px;
`;
const LogLine = styled.div`flex: none; height: 51px; white-space: pre;`;
const StatusBar = styled.footer`flex: none; display: flex; align-items: center; gap: 18px; height: 96px; padding: 2px 3px 0 6px;`;
const StatusText = styled.div`flex: 1; white-space: nowrap;`;
const StatusButton = styled.button`
  flex: none; display: flex; align-items: center; width: ${(p) => p.$w}px; height: 82px; padding: 0 4px 0 ${(p) => p.$pad}px;
  border: 3px solid #000; border-radius: 10px; background: linear-gradient(#454545, #363636);
`;
const StatusLabel = styled.span`flex: 1; margin-left: ${(p) => p.$gap || 0}px; text-align: left; white-space: nowrap;`;
const StatusTriangle = styled(Triangle)`align-self: flex-end; margin-bottom: 24px;`;

/* ---------- small glyphs ---------- */
const CloseX = ({ c = '#8c8c8c' }) => (
  <svg width="38" height="38" viewBox="0 0 38 38"><path d="M4 4 L34 34 M34 4 L4 34" stroke={c} strokeWidth="7" /></svg>
);
const DockControls = () => (
  <DockButtons>
    <button aria-label="Shade">
      <svg width="39" height="39" viewBox="0 0 39 39"><rect x="2" y="2" width="35" height="35" fill="#2c2c2c" stroke="#7f7f7f" strokeWidth="3" /><path d="M4 13 H35" stroke="#6a6a6a" strokeWidth="3" /></svg>
    </button>
    <button aria-label="Float">
      <svg width="39" height="39" viewBox="0 0 39 39"><rect x="13" y="2" width="24" height="24" fill="#2c2c2c" stroke="#7f7f7f" strokeWidth="3" /><rect x="2" y="13" width="24" height="24" fill="#2c2c2c" stroke="#7f7f7f" strokeWidth="3" /></svg>
    </button>
    <button aria-label="Close">
      <svg width="38" height="39" viewBox="0 0 38 39"><path d="M4 4 L34 35 M34 4 L4 35" stroke="#808080" strokeWidth="8" /><path d="M5 5 L33 34 M33 5 L5 34" stroke="#3f3f3f" strokeWidth="4" /></svg>
    </button>
  </DockButtons>
);
const ScrollTip = ({ up }) => (
  <svg width="10" height="6" viewBox="0 0 10 6"><path d={up ? 'M0 6 L5 0 L10 6 Z' : 'M0 0 L5 6 L10 0 Z'} fill="#9a9a9a" /></svg>
);

/* ---------- 3D scene ---------- */
const inner = [[1402, 1130], [1397, 995], [1375, 860], [1336, 720], [1286, 607], [1222, 500], [1147, 407], [1060, 330], [967, 272], [868, 238], [766, 225], [667, 232], [570, 262], [474, 314], [387, 382], [310, 472], [243, 577], [190, 690], [150, 812]];
const outer = '28,757 75,612 128,490 197,375 279,272 371,188 471,122 575,76 682,53 792,50 901,67 1007,107 1109,166 1205,247 1291,345 1365,457 1426,582 1474,717 1509,860 1527,1008 1530,1157 1515,1325 1490,1452 1368,1397 1393,1262';
const shift = (pts, d) => pts.map(([x, y]) => `${x},${y + d}`).join(' ');
const band = (a, b) => shift(inner, a) + ' ' + shift([...inner].reverse(), b);
const corners = [[28, 757], [28, 782], [28, 803], [28, 827], [58, 799], [58, 820], [119, 827], [119, 848], [150, 815], [150, 840], [150, 861], [150, 884]];
const holes = [[1508, 909, 0], [2014, 905, 0], [1126, 1168, 1], [2408, 1158, -1], [2504, 1549, -1]];

const EndFace = ({ dx = 0, dy = 0 }) => (
  <g transform={`translate(${dx} ${dy})`} stroke="#14181b">
    <polygon points="28,757 150,812 150,884 28,827" fill="#535a5c" />
    <polygon points="28,783 58,798 58,819 28,804" fill="#7a8083" />
    <polygon points="119,828 150,841 150,861 119,848" fill="#7a8083" />
    {corners.map(([x, y]) => <rect key={`${x}-${y}`} x={x - 4} y={y - 7} width="8" height="14" fill="#14181b" stroke="none" />)}
  </g>
);
const BoltHole = ({ x, y, side }) => (
  <g transform={`translate(${x} ${y})`} stroke="#12161a" strokeWidth="2">
    <ellipse rx="21" ry="17" fill="#50585b" />
    <path d="M-19 5 C-16 -10 16 -10 19 5 C16 21 -16 21 -19 5 Z" fill="#6e747a" />
    <path d="M-11 14 V9 C-10 -3 10 -3 11 9 V14 C6 18 -6 18 -11 14 Z" fill="#575f62" />
    <path d={side < 0 ? 'M-18 6 L-8 7 L-10 14 Z' : side > 0 ? 'M18 6 L8 7 L10 14 Z' : 'M-5 11 H2 V16 H-5 Z'} fill="#12161a" />
    {side !== 0 && <rect x={side * 22 - 4} y="-2" width="8" height="6" fill="#12161a" stroke="none" />}
  </g>
);
const Scene = () => (
  <svg viewBox="834 361 1806 1481" preserveAspectRatio="xMidYMid meet" role="img" aria-label="3D view">
    <defs>
      <linearGradient id="wall" x1="0" x2="1"><stop offset="0" stopColor="#2b3135" /><stop offset=".5" stopColor="#565e60" /><stop offset=".75" stopColor="#43494c" /><stop offset="1" stopColor="#1c2023" /></linearGradient>
      <linearGradient id="groove" x1="0" x2="1"><stop offset="0" stopColor="#6f7376" /><stop offset=".5" stopColor="#70767c" /><stop offset="1" stopColor="#5c6164" /></linearGradient>
    </defs>
    <g transform="translate(980 790) scale(1.0459 .5995)" strokeWidth="2" stroke="#12161a" strokeLinejoin="round">
      <polygon points={band(45, 69)} fill="url(#wall)" />
      <polygon points={band(24, 45)} fill="url(#groove)" />
      <polygon points={band(0, 24)} fill="url(#wall)" />
      <polygon points="1530,1157 1515,1325 1490,1452 1490,1525 1517,1390 1530,1190" fill="#1d2226" />
      <path d="M1514 1380 L1493 1480" stroke="#8a8f92" />
      <polygon points={outer + ' ' + shift(inner, 0)} fill="#6b7179" />
      <EndFace />
      <EndFace dx={1340} dy={640} />
    </g>
    {holes.map(([x, y, s]) => <BoltHole key={x} x={x} y={y} side={s} />)}

    <path d="M2567 1766 V1742" stroke="#23238c" strokeWidth="3" />
    <polygon points="2567,1728 2573,1744 2567,1748 2560,1744" fill="#23238c" />
    <path d="M2567 1766 L2576 1746" stroke="#238023" strokeWidth="2" />
    <polygon points="2581,1735 2582,1744 2577,1750 2572,1742" fill="#238023" />
    <path d="M2567 1767 L2602 1776" stroke="#8c2323" strokeWidth="3" />
    <polygon points="2616,1780 2602,1771 2598,1780" fill="#8c2323" />
    <g fill="#000" fontFamily="Noto Sans, sans-serif" fontSize="11">
      <text x="2567" y="1725">Z</text><text x="2581" y="1733">Y</text><text x="2617" y="1780">X</text>
    </g>

    <g transform="translate(2480 350) scale(.7832 .3333)" fill="#6e7274" stroke="#2c2e2f" strokeWidth="2">
      <polygon points="113,52 99,92 127,92" /><polygon points="113,446 99,406 127,406" />
      <polygon points="29,248 45,214 45,283" /><polygon points="196,248 180,214 180,283" />
      <path d="M88 72 Q60 90 56 122 L50 116 L52 155 L70 130 L63 126 Q70 102 89 92 Z" />
      <path d="M136 72 Q166 90 169 126 L175 122 L174 155 L156 130 L163 126 Q156 102 136 92 Z" />
      <ellipse cx="186" cy="77" rx="8" ry="19" />
      <path d="M157 376 L169 361 L182 376 V406 L169 419 L157 406 Z M157 376 L169 388 L182 376 M169 388 V419" />
      <path d="M105 122 L148 145 L160 185 L158 240 L145 350 L120 375 L75 348 L66 300 L64 240 L82 140 Z" fill="#707476" />
      <path d="M82 145 L142 162 L158 190 M142 162 L132 248 L76 228 L82 145 M76 228 L66 246 M132 248 L124 260 V284 L132 300 L144 286 M132 248 L144 250 L158 190 M124 260 L80 238 M124 284 L78 264 M132 300 L76 278 M144 286 L144 250 M132 300 L120 372" fill="none" stroke="#515557" />
      <path d="M56 264 V362" stroke="#23238c" strokeWidth="3" /><path d="M57 358 L77 250" stroke="#35c435" strokeWidth="2" /><path d="M57 362 L118 404" stroke="#a02323" strokeWidth="4" />
    </g>
    <g fill="#45494b" fontFamily="Noto Sans, sans-serif" fontSize="13">
      <text x="2555" y="416" transform="rotate(6 2555 416)">TOP</text>
      <text x="2537" y="454" transform="rotate(14 2537 454)">FRONT</text>
    </g>
  </svg>
);

/* ---------- data ---------- */
const menus = ['File', 'Edit', 'View', 'Tools', 'Macro', 'Sketch', 'Part Design', 'Windows', 'Help'];
const bar1a = ['newDoc', 'open', 'save', '|g', 'undo:c', 'redo:c', '|s', 'refresh', '|g'];
const bar1b = ['|g', 'fit', 'fitSel', 'iso:m', 'align', '|s', 'noDraw:m', 'boxSel:m', 'lensSync:m', 'caliper'];
const bar2 = ['part', 'folder', 'link:m', 'braces', '|g', 'what', '|g', 'body', 'sketch:m', 'validate', 'pawn', 'shape', 'sheep', 'datum:m', '|g',
  'pad', 'revolve', 'loft', 'pipe', 'helix', 'addBox:m', '|s', 'pocket', 'hole', 'groove', 'subLoft', 'subPipe', 'subHelix', 'subBox:m', '|s', 'bool', '|g',
  'fillet', 'chamfer', 'draft', 'thick', '|g', 'mirror', 'linear', 'polar'];
const tree = [
  { level: 0, open: true, icon: 'doc', text: 'Arches5', bold: true },
  { level: 1, open: true, eye: 'eye', icon: 'body', text: 'Body', bold: true, hot: true },
  { level: 2, open: false, eye: 'eyeOff', icon: 'origin', text: 'Origin', dim: true },
  { level: 2, open: true, eye: 'eyeOff', icon: 'padGrey', text: 'Pad', dim: true },
  { level: 3, eye: 'eyeOff', icon: 'sketchGrey', text: 'Sketch', dim: true },
  { level: 2, open: true, eye: 'eyeOff', icon: 'pocketGrey', text: 'Pocket', dim: true },
  { level: 3, eye: 'eyeOff', icon: 'sketchGrey', text: 'Sketch001', dim: true },
  { level: 2, open: false, eye: 'eyeOff', icon: 'pocketGrey', text: 'Pocket001', dim: true },
  { level: 2, open: true, eye: 'eyeOff', icon: 'holeGrey', text: 'Hole', dim: true },
  { level: 3, eye: 'eyeOff', icon: 'sketchBad', text: 'Sketch003', dim: true },
  { level: 2, eye: 'eye', icon: 'polarOk', text: 'PolarPattern' },
  { level: 1, eye: 'eye', icon: 'braces', text: 'VarSet' },
];
const message = 'Arches4#Sketch003: The Sketch has partially redundant constraints!';
const log = ['10:18:15', '10:18:15', '10:18:34', '10:18:34'];

const Tools = ({ items, cell }) => items.map((item, i) => {
  if (item === '|g') return <Grip key={i} />;
  if (item === '|s') return <Divider key={i} />;
  const [name, kind] = item.split(':');
  return (
    <ToolButton key={i} $cell={cell} $menu={kind === 'm'} aria-label={name}>
      <Art name={name} />
      {kind === 'm' && <ToolTriangle />}
      {kind === 'c' && <CornerTriangle />}
    </ToolButton>
  );
});

const Branch = ({ open }) => (
  <svg width="26" height="26" viewBox="0 0 26 26">
    <path d={open ? 'M0 6 H26 L13 20 Z' : 'M6 0 L19 13 L6 26 Z'} fill="#ffffff" />
  </svg>
);

export default function App() {
  return (
    <Window>
      <Global />
      <TitleBar>
        <WindowTitle>Arches5 - FreeCAD 1.0.2</WindowTitle>
        <WindowButtons>
          <RoundButton aria-label="Minimize"><svg width="20" height="20"><path d="M2 15 H18" stroke="#fff" strokeWidth="2" /></svg></RoundButton>
          <RoundButton aria-label="Restore"><svg width="20" height="20"><path d="M7 3 H17 V14" fill="none" stroke="#8c8c8c" strokeWidth="2" /><rect x="3" y="7" width="10" height="10" fill="none" stroke="#fff" strokeWidth="2" /></svg></RoundButton>
          <RoundButton aria-label="Close window"><svg width="20" height="20"><path d="M3 3 L17 17 M17 3 L3 17" stroke="#fff" strokeWidth="2" /></svg></RoundButton>
        </WindowButtons>
      </TitleBar>

      <MenuBar>
        {menus.map((m) => <MenuItem key={m}><u>{m[0]}</u>{m.slice(1)}</MenuItem>)}
      </MenuBar>

      <ToolBar $lead={14}>
        <Grip $first />
        <Tools items={bar1a} cell={95} />
        <ComboBox>
          <Art name="body" size={42} />
          <ComboSelect aria-label="Workbench"><option>Part Design</option></ComboSelect>
          <SmallTriangle />
        </ComboBox>
        <Tools items={bar1b} cell={96} />
      </ToolBar>

      <ToolBar $lead={11}>
        <Grip $first />
        <Tools items={bar2} cell={96} />
        <Overflow aria-label="More tools">
          <svg width="36" height="40" viewBox="0 0 36 40"><path d="M7 4 L19 20 L7 36 M25 4 L37 20 L25 36" fill="none" stroke="#454545" strokeWidth="5" /></svg>
        </Overflow>
      </ToolBar>

      <Main>
        <LeftDock>
          <DockTitle><DockLabel>Model</DockLabel><DockControls /></DockTitle>
          <TreePane>
            <Tree>
              {tree.map((t) => (
                <TreeItem key={t.text} $level={t.level} $bold={t.bold} $dim={t.dim}>
                  <Expander>{t.open !== undefined && <Branch open={t.open} />}</Expander>
                  <TreeSlots $hot={t.hot}>
                    {t.eye && <Slot><Art name={t.eye} size={38} /></Slot>}
                    <Slot><Art name={t.icon} size={t.level ? 46 : 44} /></Slot>
                    <TreeText>{t.text}</TreeText>
                  </TreeSlots>
                </TreeItem>
              ))}
            </Tree>
            <ScrollBar $w={42}>
              <ScrollButton aria-label="Scroll up"><ScrollTip up /></ScrollButton>
              <ScrollHandle $n={678} />
              <ScrollGap $n={64} />
              <ScrollButton aria-label="Scroll down"><ScrollTip /></ScrollButton>
            </ScrollBar>
          </TreePane>
          <PropertyPane />
          <PaneTabs><PaneTab>View</PaneTab><PaneTab $on>Data</PaneTab></PaneTabs>
        </LeftDock>

        <CenterArea>
          <Canvas><Scene /></Canvas>
          <DocTabs>
            <DocTab>
              <Art name="freecad" size={46} /><TabButton>Start</TabButton>
              <button aria-label="Close Start"><CloseX /></button>
            </DocTab>
            <DocTab $on>
              <Art name="doc" size={44} /><TabButton>Arches5 : 1</TabButton>
              <button aria-label="Close Arches5"><CloseX c="#9a9a9a" /></button>
            </DocTab>
          </DocTabs>
        </CenterArea>

        <RightDock>
          <DockTitle><DockLabel>Tasks</DockLabel><DockControls /></DockTitle>
          <TaskArea>
            <TaskCard>
              <TaskHead>
                <Art name="datumBlue" size={44} />
                <TaskTitle>Start Part</TaskTitle>
                <button aria-label="Collapse">
                  <svg width="52" height="52" viewBox="0 0 52 52"><circle cx="26" cy="26" r="23" fill="none" stroke="#555a68" strokeWidth="4" /><path d="M17 25 L26 15 L35 25 M17 38 L26 28 L35 38" fill="none" stroke="#c8c8c8" strokeWidth="4" /></svg>
                </button>
              </TaskHead>
              <TaskBody><TaskLink href="#create-body"><Art name="body" size={42} />Create body</TaskLink></TaskBody>
            </TaskCard>
          </TaskArea>
        </RightDock>
      </Main>

      <ReportDock>
        <DockTitle><DockLabel>Report view</DockLabel><DockControls /></DockTitle>
        <ReportPane>
          <Log>
            {log.map((t, i) => <LogLine key={i}>{`${t}  ${message}`}</LogLine>)}
            <LogLine />
          </Log>
          <ScrollBar $w={38}>
            <ScrollButton aria-label="Scroll up"><ScrollTip up /></ScrollButton>
            <ScrollGap $n={98} />
            <ScrollHandle $n={30} />
            <ScrollButton aria-label="Scroll down"><ScrollTip /></ScrollButton>
          </ScrollBar>
        </ReportPane>
      </ReportDock>

      <StatusBar>
        <StatusText>Preselected: Arches3.Body.PolarPattern.Vertex12 (100.00 mm, 0.00 mm, -1.50 mm)</StatusText>
        <StatusButton $w={270} $pad={4}><Art name="swatch" size={40} /><StatusLabel $gap={16}>11</StatusLabel><StatusTriangle $tone="#b4b4b4" /></StatusButton>
        <StatusButton $w={279} $pad={31}><Art name="mouse" size={46} /><StatusLabel $gap={7}>Blender</StatusLabel><StatusTriangle $tone="#b4b4b4" /></StatusButton>
        <StatusButton $w={483} $pad={13}><StatusLabel>268.45 mm x 219.84 mm</StatusLabel><StatusTriangle $tone="#b4b4b4" /></StatusButton>
      </StatusBar>
    </Window>
  );
}
